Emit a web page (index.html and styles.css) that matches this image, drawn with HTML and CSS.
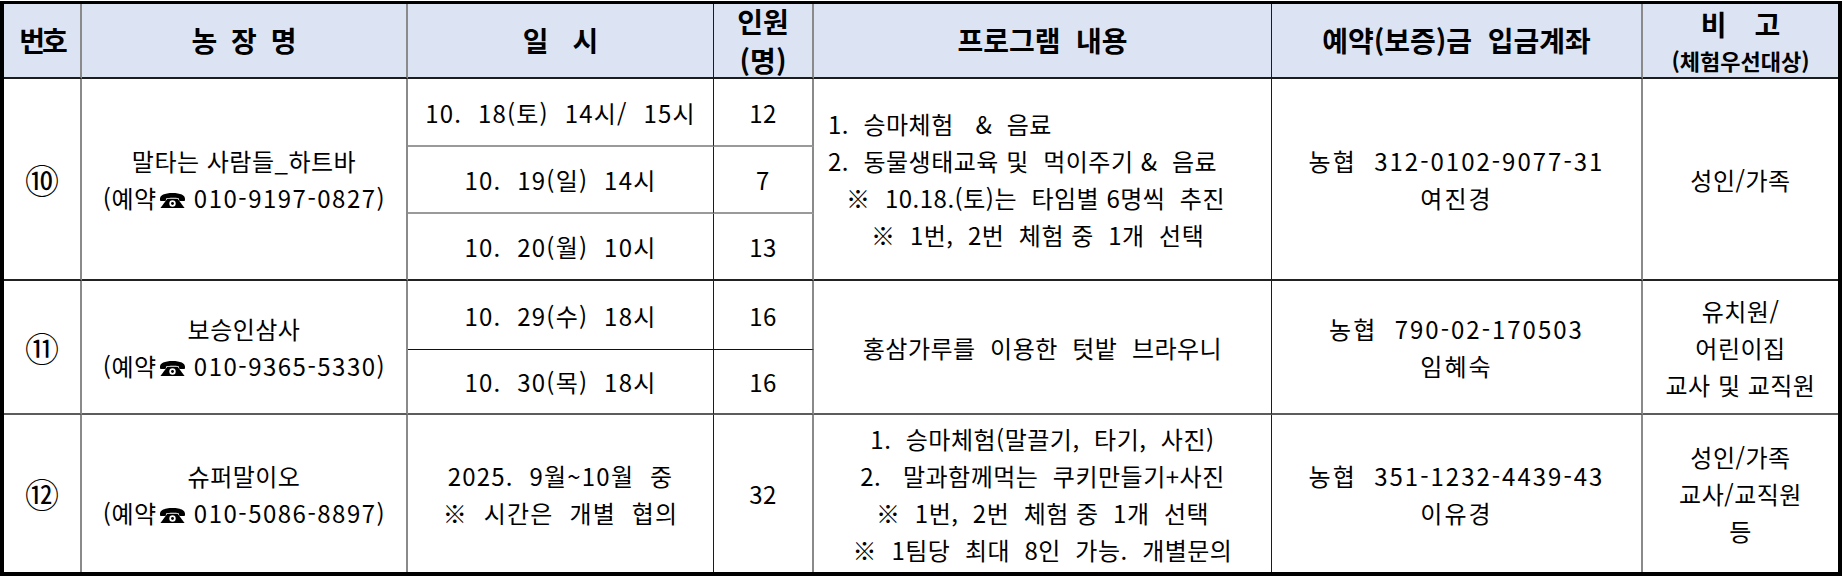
FILE: index.html
```html
<!DOCTYPE html>
<html lang="ko">
<head>
<meta charset="utf-8">
<title>체험 프로그램 예약</title>
<link rel="stylesheet" href="styles.css">
</head>
<body>
<div class="sheet">
  <div class="cell hd k1 rh"><span class="tight">번호</span></div>
  <div class="cell hd k2 rh"><span class="wide1">농 장 명</span></div>
  <div class="cell hd k3 rh"><span class="wide2">일 시</span></div>
  <div class="cell hd k4 rh"><div class="lines hl"><span class="ln">인원</span><span class="ln">(명)</span></div></div>
  <div class="cell hd k5 rh">프로그램  내용</div>
  <div class="cell hd k6 rh">예약(보증)금  입금계좌</div>
  <div class="cell hd k7 rh"><div class="lines"><span class="ln wide3 hl2">비 고</span><span class="ln small">(체험우선대상)</span></div></div>

  <div class="cell k1 g10 grp num">⑩</div>
  <div class="cell k2 g10 grp"><div class="lines"><span class="ln">말타는 사람들_하트바</span><span class="ln">(예약<svg class="tel" viewBox="0 0 28 17" aria-hidden="true"><path d="M1 7.5C0.6 3 6 0.8 14 0.8S27.4 3 27 7.5L26.6 9H21.2L20.4 6.2C17.6 5.4 10.4 5.4 7.6 6.2L6.8 9H1.4Z"/><path d="M8.6 6.8H19.4L26.5 16.4H1.5Z"/><circle cx="14" cy="11.6" r="3.3" fill="#fff"/><circle cx="14" cy="11.6" r="1.5"/></svg> <span class="ph">010-9197-0827</span>)</span></div></div>
  <div class="cell k3 s1 sub date">10.  18(토)  14시/  15시</div>
  <div class="cell k4 s1 sub">12</div>
  <div class="cell k3 s2 sub date">10.  19(일)  14시</div>
  <div class="cell k4 s2 sub">7</div>
  <div class="cell k3 s3 grp date">10.  20(월)  10시</div>
  <div class="cell k4 s3 grp">13</div>
  <div class="cell k5 g10 grp left"><div class="lines"><span class="ln">1.  승마체험   &amp;  음료</span><span class="ln">2.  동물생태교육 및  먹이주기 &amp;  음료</span><span class="ln in1">※  10.18.(토)는  타임별 6명씩  추진</span><span class="ln in2">※  1번,  2번  체험 중  1개  선택</span></div></div>
  <div class="cell k6 g10 grp acct"><div class="lines"><span class="ln">농협  312-0102-9077-31</span><span class="ln">여진경</span></div></div>
  <div class="cell k7 g10 grp">성인/가족</div>

  <div class="cell k1 g11 mid num">⑪</div>
  <div class="cell k2 g11 mid"><div class="lines"><span class="ln">보승인삼사</span><span class="ln">(예약<svg class="tel" viewBox="0 0 28 17" aria-hidden="true"><path d="M1 7.5C0.6 3 6 0.8 14 0.8S27.4 3 27 7.5L26.6 9H21.2L20.4 6.2C17.6 5.4 10.4 5.4 7.6 6.2L6.8 9H1.4Z"/><path d="M8.6 6.8H19.4L26.5 16.4H1.5Z"/><circle cx="14" cy="11.6" r="3.3" fill="#fff"/><circle cx="14" cy="11.6" r="1.5"/></svg> <span class="ph">010-9365-5330</span>)</span></div></div>
  <div class="cell k3 s4 dark date">10.  29(수)  18시</div>
  <div class="cell k4 s4 dark">16</div>
  <div class="cell k3 s5 mid date">10.  30(목)  18시</div>
  <div class="cell k4 s5 mid">16</div>
  <div class="cell k5 g11 mid">홍삼가루를  이용한  텃밭  브라우니</div>
  <div class="cell k6 g11 mid acct"><div class="lines"><span class="ln">농협  790-02-170503</span><span class="ln">임혜숙</span></div></div>
  <div class="cell k7 g11 mid"><div class="lines"><span class="ln">유치원/</span><span class="ln">어린이집</span><span class="ln">교사 및 교직원</span></div></div>

  <div class="cell k1 g12 num">⑫</div>
  <div class="cell k2 g12"><div class="lines"><span class="ln">슈퍼말이오</span><span class="ln">(예약<svg class="tel" viewBox="0 0 28 17" aria-hidden="true"><path d="M1 7.5C0.6 3 6 0.8 14 0.8S27.4 3 27 7.5L26.6 9H21.2L20.4 6.2C17.6 5.4 10.4 5.4 7.6 6.2L6.8 9H1.4Z"/><path d="M8.6 6.8H19.4L26.5 16.4H1.5Z"/><circle cx="14" cy="11.6" r="3.3" fill="#fff"/><circle cx="14" cy="11.6" r="1.5"/></svg> <span class="ph">010-5086-8897</span>)</span></div></div>
  <div class="cell k3 g12 date"><div class="lines"><span class="ln">2025.  9월~10월  중</span><span class="ln">※  시간은  개별  협의</span></div></div>
  <div class="cell k4 g12">32</div>
  <div class="cell k5 g12"><div class="lines"><span class="ln">1.  승마체험(말끌기,  타기,  사진)</span><span class="ln">2.   말과함께먹는  쿠키만들기+사진</span><span class="ln">※  1번,  2번  체험 중  1개  선택</span><span class="ln">※  1팀당  최대  8인  가능.  개별문의</span></div></div>
  <div class="cell k6 g12 acct"><div class="lines"><span class="ln">농협  351-1232-4439-43</span><span class="ln">이유경</span></div></div>
  <div class="cell k7 g12"><div class="lines"><span class="ln">성인/가족</span><span class="ln">교사/교직원</span><span class="ln">등</span></div></div>
</div>
</body>
</html>
```

FILE: styles.css
```css
* { box-sizing: border-box; }

html, body {
  margin: 0;
  padding: 0;
  background: #ffffff;
}

body {
  font-family: "Noto Sans CJK KR", "Noto Sans", sans-serif;
  color: #000;
}

.sheet {
  margin-top: 1px;
  width: 1842px;
  display: grid;
  grid-template-columns: 78px 326px 306px 100px 458px 371px 195px;
  grid-template-rows: 75px 68px 67px 67px 69px 65px 157px;
  border-style: solid;
  border-color: #000;
  border-width: 3px 4px 4px 4px;
}

.cell {
  display: flex;
  align-items: center;
  justify-content: center;
  text-align: center;
  font-size: 24px;
  line-height: 37px;
  letter-spacing: 0.5px;
  white-space: pre;
  border-right: 2px solid #8a8a8a;
}

.k1 { grid-column: 1; }
.k2 { grid-column: 2; }
.k3 { grid-column: 3; border-right: 1px solid #1c1c1c; }
.k4 { grid-column: 4; }
.k5 { grid-column: 5; border-right: 1px solid #1c1c1c; }
.k6 { grid-column: 6; }
.k7 { grid-column: 7; border-right: 0; }

.rh { grid-row: 1; }
.g10 { grid-row: 2 / span 3; }
.s1 { grid-row: 2; }
.s2 { grid-row: 3; }
.s3 { grid-row: 4; }
.g11 { grid-row: 5 / span 2; }
.s4 { grid-row: 5; }
.s5 { grid-row: 6; }
.g12 { grid-row: 7; }

.hd {
  background: #dce4f4;
  font-weight: 700;
  font-size: 28px;
  letter-spacing: 0;
  border-bottom: 2px solid #1c1c1c;
}

.sub { border-bottom: 2px solid #9a9a9a; }
.grp { border-bottom: 2px solid #222; }
.dark { border-bottom: 1px solid #111; }
.mid { border-bottom: 2px solid #5c5c5c; }

.lines {
  display: flex;
  flex-direction: column;
  align-items: center;
}

.ln { display: block; }

.hl { line-height: 39px; }
.hl2 { line-height: 38px; }

.left {
  justify-content: flex-start;
  padding-left: 14px;
}

.left .lines { align-items: flex-start; }

.in1 { padding-left: 18px; }
.in2 { padding-left: 43px; }

.tight { letter-spacing: -3px; }
.wide1 { word-spacing: 6px; }
.wide2 { word-spacing: 16px; }
.wide3 { word-spacing: 20px; }

.small {
  font-size: 22px;
  line-height: 34px;
}

.num {
  font-size: 34px;
  letter-spacing: 0;
}

.date { letter-spacing: 1.2px; }
.acct { letter-spacing: 2px; }
.ph { letter-spacing: 1.5px; }

.tel {
  width: 27px;
  height: 17px;
  margin: 0 1px 0 2px;
  vertical-align: -1px;
  fill: #000;
}
```
